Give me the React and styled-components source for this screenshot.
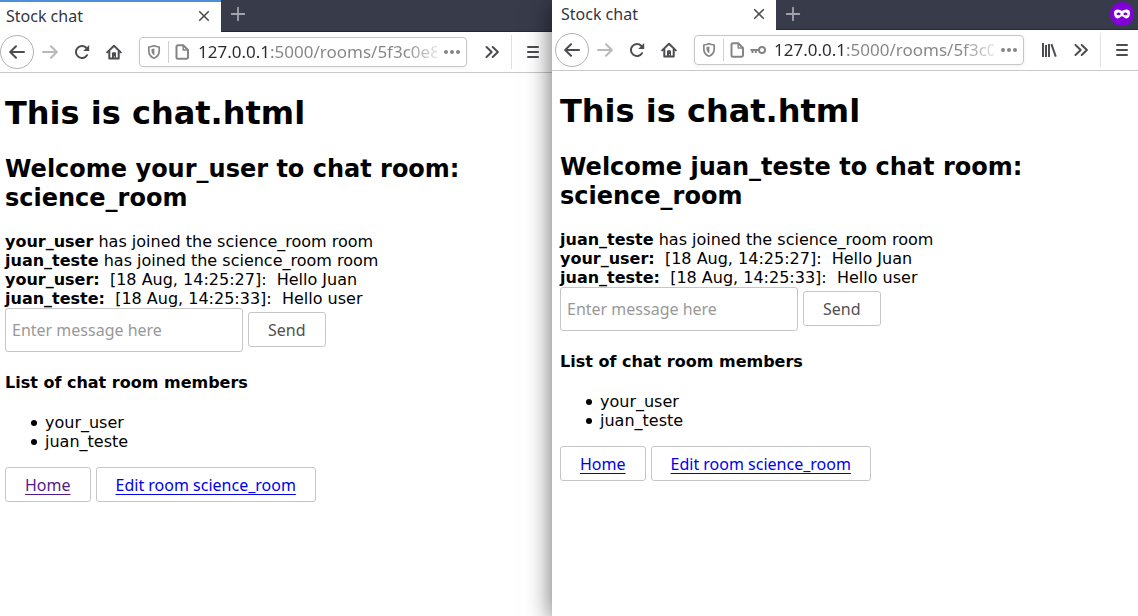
import React from "react";
import styled, { createGlobalStyle } from "styled-components";

const UI = `"Noto Sans", "Open Sans", sans-serif`;
const PAGE = `"DejaVu Sans", Verdana, sans-serif`;

const GlobalStyle = createGlobalStyle`
  *, *::before, *::after { box-sizing: border-box; }
  body { margin: 0; background: #fff; }
  svg { display: block; flex: none; }
`;

const Desktop = styled.div`
  display: grid;
  grid-template-columns: 552fr 586fr;
  min-height: 100vh;
  overflow: hidden;
`;

const Window = styled.section`
  position: relative;
  min-width: 0;
  background: #fff;
  box-shadow: ${(p) => (p.$front ? "0 4px 24px rgba(0, 0, 0, 0.6)" : "none")};
`;

const TabBar = styled.div`
  display: flex;
  height: ${(p) => (p.$front ? 30 : 32)}px;
  background: #383b4a;
  border-bottom: 1px solid #252836;
`;

const Tab = styled.div`
  display: flex;
  align-items: center;
  justify-content: space-between;
  width: ${(p) => (p.$front ? 224 : 221)}px;
  margin-bottom: -1px;
  padding: 0 8px 2px ${(p) => (p.$front ? 9 : 6)}px;
  background: #fff;
  border-top: ${(p) => (p.$front ? "none" : "2px solid #4a90d9")};
  color: #33363f;
  font: 16px/20px ${UI};
`;

const IconButton = styled.button`
  display: flex;
  align-items: center;
  justify-content: center;
  flex: none;
  width: ${(p) => p.$size || 32}px;
  height: ${(p) => p.$size || 32}px;
  padding: 0;
  border: 0;
  background: none;
  color: ${(p) => p.$color || "#4c4d50"};
`;

const NewTabButton = styled(IconButton)`
  width: 34px;
  height: 28px;
  color: #a3a4ab;
`;

const BackButton = styled(IconButton)`
  width: 34px;
  height: 34px;
  border: 1px solid #b1b1b1;
  border-radius: 50%;
`;

const PrivateBadge = styled.span`
  display: flex;
  align-items: center;
  justify-content: center;
  width: 24px;
  height: 24px;
  margin: 2px 4px 0 auto;
  border-radius: 50%;
  background: #8000d7;
`;

const Toolbar = styled.div`
  display: flex;
  align-items: center;
  height: 41px;
  padding: 0 ${(p) => (p.$front ? 0 : 3)}px 0 ${(p) => (p.$front ? 3 : 0)}px;
  border-bottom: 1px solid #c8c8c8;
`;

const UrlBar = styled.div`
  display: flex;
  align-items: center;
  flex: 1;
  min-width: 0;
  height: 30px;
  margin: 0 9px;
  padding: 0 6px;
  border: 1px solid #c6c6c6;
  border-radius: 4px;
  box-shadow: 0 1px 4px rgba(0, 0, 0, 0.06);
  color: #858585;
`;

const UrlDivider = styled.span`
  width: 1px;
  height: 22px;
  margin: 0 5px 0 6px;
  background: #d0d0d0;
`;

const PageInfo = styled.span`
  display: flex;
  gap: 5px;
`;

const UrlInput = styled.input`
  flex: 1;
  min-width: 0;
  margin: 0 7px 0 8px;
  padding: 0;
  border: 0;
  outline: 0;
  background: linear-gradient(
    to right,
    #2a2b30 72px,
    #858585 72px,
    #858585 calc(100% - 32px),
    #e4e4e4
  );
  background-clip: text;
  -webkit-background-clip: text;
  color: transparent;
  font: 17px/22px ${UI};
`;

const ToolDivider = styled.span`
  width: 1px;
  height: 34px;
  margin: 0 5px 0 3px;
  background: #e0e0e0;
`;

const Page = styled.main`
  padding: 22px 8px 22px ${(p) => (p.$front ? 8 : 5)}px;
  color: #000;
  font: 16px/19px ${PAGE};
`;

const Title = styled.h1`
  margin: 0 0 23px;
  font-size: 32px;
  line-height: 37px;
`;

const Welcome = styled.h2`
  margin: 0 0 19px;
  font-size: 24px;
  line-height: 29px;
`;

const MessageForm = styled.form`
  display: flex;
  align-items: baseline;
  gap: 5px;
`;

const MessageInput = styled.input`
  width: 238px;
  height: 44px;
  padding: 0 6px;
  border: 1px solid #c6c6c6;
  border-radius: 3px;
  background: #fff;
  color: #333;
  font: 16px/22px ${UI};
  &::placeholder { color: #999; opacity: 1; }
`;

const SendButton = styled.button`
  padding: 6px 19px 5px;
  border: 1px solid #c6c6c6;
  border-radius: 3px;
  background: #fff;
  color: #505050;
  font: 16px/22px ${UI};
`;

const MembersTitle = styled.h4`
  margin: 21px 0;
  font-size: 16px;
`;

const Members = styled.ul`
  margin: 0 0 16px;
  padding-left: 26px;
  list-style: none;
`;

const Member = styled.li`
  display: flex;
  align-items: center;
  gap: 8px;
  &::before {
    content: "";
    width: 6px;
    height: 6px;
    border-radius: 50%;
    background: #000;
  }
`;

const Actions = styled.nav`
  display: flex;
  gap: 5px;
`;

const ActionLink = styled.a`
  padding: 6px 19px 5px;
  border: 1px solid #c6c6c6;
  border-radius: 3px;
  color: ${(p) => (p.$visited ? "#551a8b" : "#0000ee")};
  font: 16px/22px ${UI};
  text-underline-offset: 3px;
`;

function Icon({ children, size = 16, width = 2, ...rest }) {
  return (
    <svg width={size} height={size} viewBox="0 0 16 16" fill="none" stroke="currentColor"
      strokeWidth={width} strokeLinecap="round" strokeLinejoin="round" aria-hidden="true" {...rest}>
      {children}
    </svg>
  );
}

const CloseIcon = () => <Icon width={1.6}><path d="M3.7 3.7l8.6 8.6M12.3 3.7l-8.6 8.6" /></Icon>;
const PlusIcon = () => <Icon width={1.8}><path d="M8 1.7v12.6M1.7 8h12.6" /></Icon>;
const BackIcon = () => <Icon><path d="M15 8H1.5M7 2.2L1.2 8 7 13.8" /></Icon>;
const ForwardIcon = () => <Icon><path d="M1 8h13.5M9 2.2L14.8 8 9 13.8" /></Icon>;
const ReloadIcon = () => (
  <Icon>
    <path d="M13 11.2A6 6 0 1 1 12.2 3.8" />
    <path d="M15.2 1v6H9.2z" fill="currentColor" stroke="none" />
  </Icon>
);
const HomeIcon = () => (
  <Icon>
    <path d="M1.2 8.4L8 1.7l6.8 6.7" />
    <path d="M3.3 7.5v7h9.4v-7" />
    <path d="M6 14V9.2a1 1 0 0 1 1-1h2a1 1 0 0 1 1 1V14H8.6v-2H8v2z" fill="currentColor" stroke="none" />
  </Icon>
);
const ShieldIcon = () => (
  <Icon width={1.7}>
    <path d="M8 1.8c1.7.8 3.5 1.1 5.2 1.2v3.8c0 3.6-1.7 6.1-5.2 7.5-3.5-1.4-5.2-3.9-5.2-7.5V3C4.5 2.9 6.3 2.6 8 1.8z" />
    <path d="M8.4 4.5v7C6.4 10.4 5.5 8.8 5.5 6.8V5.1z" fill="currentColor" stroke="none" />
  </Icon>
);
const PageIcon = () => (
  <Icon>
    <path d="M4 1.2h5.2L14 6v7.3a1.5 1.5 0 0 1-1.5 1.5H4a1.5 1.5 0 0 1-1.5-1.5V2.7A1.5 1.5 0 0 1 4 1.2z" />
    <path d="M9.2 1.5V6h4.5" strokeWidth="1.5" />
  </Icon>
);
const KeyIcon = () => (
  <Icon>
    <circle cx="12" cy="8" r="3" />
    <path d="M9 8H.5M2.5 8v3M5.8 8v3" strokeLinecap="butt" />
  </Icon>
);
const DotsIcon = () => (
  <Icon fill="currentColor" stroke="none">
    <circle cx="2" cy="8" r="2" /><circle cx="8" cy="8" r="2" /><circle cx="14" cy="8" r="2" />
  </Icon>
);
const LibraryIcon = () => (
  <Icon strokeLinecap="butt">
    <path d="M2 1v14M5 3v12M8 2v13M10.4 2.2l4.4 12.4" />
  </Icon>
);
const MoreIcon = () => <Icon><path d="M2.5 3l5.2 5-5.2 5M8.7 3l5.2 5-5.2 5" /></Icon>;
const MenuIcon = () => <Icon><path d="M3 3h10M3 8h10M3 13h10" /></Icon>;
const MaskIcon = () => (
  <svg width="16" height="10" viewBox="0 0 16 10" aria-hidden="true">
    <path fill="#fff" fillRule="evenodd" d="M3.5.6C5.6.6 6.6 1.7 8 1.7S10.4.6 12.5.6c2.3 0 3.5 1.2 3.5 3.4 0 3.3-1.5 5.4-3.7 5.4C10.2 9.4 9.4 7.3 8 7.3S5.8 9.4 3.7 9.4C1.5 9.4 0 7.3 0 4 0 1.8 1.2.6 3.5.6zM4.6 3.4C3.4 3.4 2.7 4.2 2.3 5c.7.8 1.4 1.2 2.3 1.2S6.300 5.800 6.800 5C6.300 4 5.700 3.400 4.600 3.400zM11.400 3.400C10.300 3.400 9.700 4 9.200 5c.5.8 1.300 1.200 2.200 1.200S13 5.800 13.700 5c-.4-.8-1.100-1.600-2.300-1.600z" />
  </svg>
);

const MESSAGES = [
  { user: "your_user:", text: "\u00a0 [18 Aug, 14:25:27]: \u00a0Hello Juan" },
  { user: "juan_teste:", text: "\u00a0 [18 Aug, 14:25:33]: \u00a0Hello user" },
];
const JOINED = " has joined the science_room room";

function Browser({ user, joined, front = false }) {
  return (
    <Window $front={front} aria-label={`Stock chat, ${user}`}>
      <TabBar $front={front}>
        <Tab $front={front}>
          <span>Stock chat</span>
          <IconButton $size={18} aria-label="Close tab"><CloseIcon /></IconButton>
        </Tab>
        <NewTabButton aria-label="New tab"><PlusIcon /></NewTabButton>
        {front && <PrivateBadge><MaskIcon /></PrivateBadge>}
      </TabBar>
      <Toolbar $front={front}>
        <BackButton aria-label="Back"><BackIcon /></BackButton>
        <IconButton $color="#b9b9ba" aria-label="Forward"><ForwardIcon /></IconButton>
        <IconButton aria-label="Reload"><ReloadIcon /></IconButton>
        <IconButton aria-label="Home"><HomeIcon /></IconButton>
        <UrlBar>
          <ShieldIcon />
          <UrlDivider />
          <PageInfo>
            <PageIcon />
            {front && <KeyIcon />}
          </PageInfo>
          <UrlInput aria-label="Address" defaultValue="127.0.0.1:5000/rooms/5f3c0e8" />
          <DotsIcon />
        </UrlBar>
        {front && <IconButton aria-label="Library"><LibraryIcon /></IconButton>}
        <IconButton aria-label="More tools"><MoreIcon /></IconButton>
        <ToolDivider />
        <IconButton aria-label="Menu"><MenuIcon /></IconButton>
      </Toolbar>
      <Page $front={front}>
        <Title>This is chat.html</Title>
        <Welcome>Welcome {user} to chat room:<br />science_room</Welcome>
        {joined.map((name) => (
          <div key={name}><b>{name}</b>{JOINED}</div>
        ))}
        {MESSAGES.map((m) => (
          <div key={m.user}><b>{m.user}</b>{m.text}</div>
        ))}
        <MessageForm onSubmit={(e) => e.preventDefault()}>
          <MessageInput aria-label="Message" placeholder="Enter message here" />
          <SendButton>Send</SendButton>
        </MessageForm>
        <MembersTitle>List of chat room members</MembersTitle>
        <Members>
          <Member>your_user</Member>
          <Member>juan_teste</Member>
        </Members>
        <Actions>
          <ActionLink href="#home" $visited={!front}>Home</ActionLink>
          <ActionLink href="#edit">Edit room science_room</ActionLink>
        </Actions>
      </Page>
    </Window>
  );
}

export default function App() {
  return (
    <>
      <GlobalStyle />
      <Desktop>
        <Browser user="your_user" joined={["your_user", "juan_teste"]} />
        <Browser user="juan_teste" joined={["juan_teste"]} front />
      </Desktop>
    </>
  );
}
